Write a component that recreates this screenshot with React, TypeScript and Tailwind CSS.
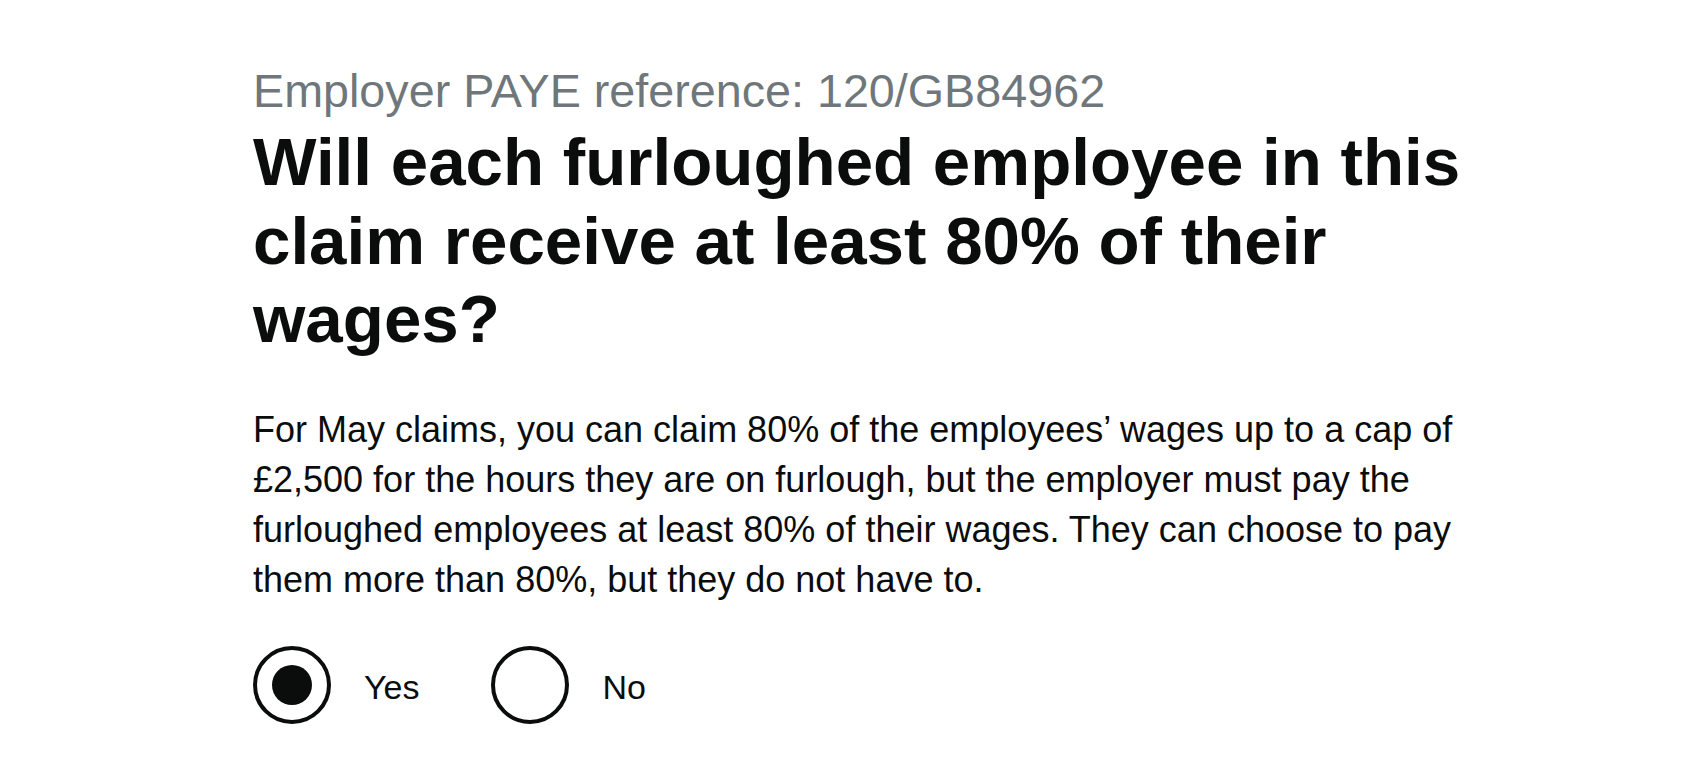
import React, { useState } from "react";

function Radio({
  label,
  checked,
  onSelect,
}: {
  label: string;
  checked: boolean;
  onSelect: () => void;
}) {
  return (
    <label className="flex cursor-pointer items-center" onClick={onSelect}>
      <span className="flex h-[78px] w-[78px] items-center justify-center rounded-full border-[4px] border-[#0b0c0c] bg-white">
        {checked && <span className="block h-[40px] w-[40px] rounded-full bg-[#0b0c0c]" />}
      </span>
      <span className="ml-[33px] pt-[3px] text-[34px] leading-[40px] text-[#0b0c0c]">{label}</span>
    </label>
  );
}

export default function App() {
  const [value, setValue] = useState<"yes" | "no">("yes");
  return (
    <div
      className="min-h-screen w-full bg-white"
      style={{ fontFamily: '"Liberation Sans", Arial, sans-serif' }}
    >
      <main className="pl-[253px] pt-[66px]">
        <div className="w-[1300px]">
          <span className="block text-[46.7px] leading-[50px] text-[#6f777b]">
            Employer PAYE reference: 120/GB84962
          </span>
          <h1 className="mt-[7px] text-[67.3px] font-bold leading-[78.7px] text-[#0b0c0c]">
            Will each furloughed employee in this
            <br />
            claim receive at least 80% of their
            <br />
            wages?
          </h1>
          <p className="mt-[46px] text-[36px] leading-[50px] text-[#0b0c0c]">
            For May claims, you can claim 80% of the employees’ wages up to a cap of
            <br />
            £2,500 for the hours they are on furlough, but the employer must pay the
            <br />
            furloughed employees at least 80% of their wages. They can choose to pay
            <br />
            them more than 80%, but they do not have to.
          </p>
          <div className="mt-[41px] flex items-center gap-[72px]">
            <Radio label="Yes" checked={value === "yes"} onSelect={() => setValue("yes")} />
            <Radio label="No" checked={value === "no"} onSelect={() => setValue("no")} />
          </div>
        </div>
      </main>
    </div>
  );
}
